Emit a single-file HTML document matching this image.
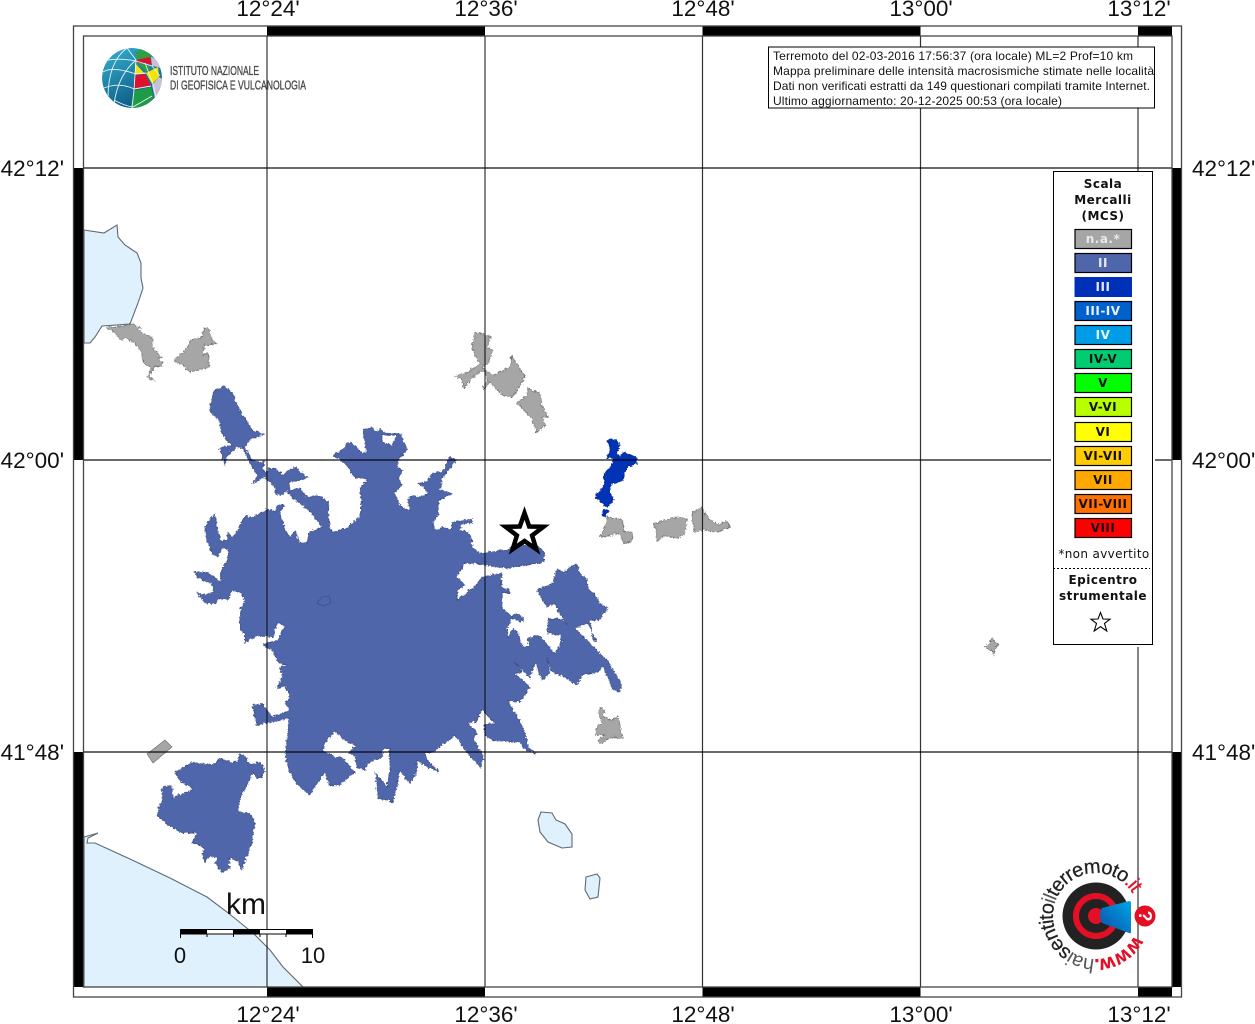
<!DOCTYPE html>
<html><head><meta charset="utf-8"><title>Mappa</title>
<style>
html,body{margin:0;padding:0;background:#fff;width:1255px;height:1024px;overflow:hidden}
svg{display:block}
text{font-family:"Liberation Sans",sans-serif}
.lab{font-size:22.5px;fill:#111}
.leg{font-family:"DejaVu Sans",sans-serif;font-size:12px;font-weight:bold;text-anchor:middle;letter-spacing:.5px;fill:#111}
.sw{stroke:#000;stroke-width:1.2}
.info{font-size:12px;fill:#111}
.b{fill:#5066ab;stroke:#3a4a80;stroke-width:.6}
.g{fill:#a6a6a6;stroke:#666;stroke-width:.6}
.t{fill:#0033b5;stroke:#00247f;stroke-width:.6}
.s{fill:#dff1fd;stroke:#5f6a72;stroke-width:1.1}
.gv{stroke:#333;stroke-width:1.2;mix-blend-mode:multiply}
.gh{stroke:#555;stroke-width:1.8;mix-blend-mode:multiply}
</style></head><body>
<svg width="1255" height="1024" viewBox="0 0 1255 1024" xmlns="http://www.w3.org/2000/svg">
<defs>
<linearGradient id="gb" x1="0" y1="0" x2=".5" y2="1"><stop offset="0" stop-color="#35b1cf"/><stop offset="1" stop-color="#0c5a85"/></linearGradient>
<linearGradient id="cone" x1="0" y1="1" x2="1" y2="0"><stop offset="0" stop-color="#0b4fa8"/><stop offset="1" stop-color="#00a5e6"/></linearGradient>
<clipPath id="gc"><circle cx="132" cy="78" r="30"/></clipPath>
<path id="arc" d="M1134.300 935.500A43 43 0 1 1 1137.500 904.900"/>
<filter id="jag" x="0" y="0" width="1255" height="1024" filterUnits="userSpaceOnUse" color-interpolation-filters="sRGB">
<feTurbulence type="turbulence" baseFrequency=".28" numOctaves="2" seed="4" result="n"/>
<feDisplacementMap in="SourceGraphic" in2="n" scale="4" xChannelSelector="R" yChannelSelector="G"/>
</filter>
</defs>
<rect width="1255" height="1024" fill="#fff"/>

<!-- water -->
<path class="s" d="M84 230L104 233L117 225L118 237L125 245L137 253L141 263L141 278L143 288L138 303L130 324L102 326L95 337L90 343L84 343Z"/>
<path class="s" d="M84 837L98 833L88 838L87 843L95 843L130 859L170 878L207 897L227 912L253 933L270 950L283 967L303 987L84 987Z"/>
<path class="s" d="M541 812L552 813L556 820L565 824L572 834L572 847L562 848L548 842L540 832L538 820Z"/>
<path class="s" d="M586 877L597 874L600 878L598 897L590 899L585 890Z"/>

<g transform="translate(-1.2 -.8)">
<g filter="url(#jag)">
<!-- gray -->
<path class="g" d="M107 327L123 326L133 323L137 327L143 328L138 330L147 335L153 338L153 347L162 357L157 360L163 362L162 366L155 366L150 375L155 381L148 377L151 367L143 362L141 350L135 343L127 338L120 340L115 332Z"/>
<path class="g" d="M202 337L205 328L210 329L212 340L217 343L210 345L205 345L203 355L208 353L210 367L190 372L183 365L174 360L188 348L190 340Z"/>
<path class="g" d="M475 334L482 333L491 337L487 347L493 350L488 363L483 367L493 375L500 372L510 367L512 355L515 362L525 375L523 382L512 397L503 395L498 390L490 382L483 390L487 380L485 373L482 370L473 378L464 388L462 379L455 376L468 372L480 363L472 348Z"/>
<path class="g" d="M528 387L533 391L540 393L542 405L549 418L542 417L546 425L537 432L533 420L527 413L517 403L527 395Z"/>
<path class="g" d="M608 517L622 519L624 531L633 532L632 542L623 543L620 533L601 537L605 527Z"/>
<path class="g" d="M653 524L677 517L687 519L685 535L677 538L665 535L657 541L656 528Z"/>
<path class="g" d="M692 513L702 507L708 517L718 525L727 521L730 527L717 532L705 530L695 532L692 520Z"/>
<path class="g" d="M600 708L605 710L604 717L610 720L618 717L623 738L612 737L600 744L598 740L605 735L595 735L598 725L603 723L599 713Z"/>
<path class="g" d="M991 638L995 641L999 645L995 648L994 655L991 650L985 647L990 644Z"/>

<!-- III -->
<path class="t" d="M608 440L617 439L620 445L617 452L620 457L623 452L637 457L637 464L627 467L622 482L612 483L610 493L614 500L607 507L595 497L604 485L605 473L613 463L613 458L607 458L610 450Z"/>
<path class="t" d="M604 509L609 510L605 517L602 515Z"/>

<!-- II main -->
<path class="b" fill-rule="evenodd" d="M240 630L245 633L245 643L257 635L273 637L277 623L285 625L278 640L268 642L263 645L273 650L278 662L287 665L280 668L283 675L277 689L285 685L291 696L285 703L290 710L272 717L263 704L253 705L257 725L289 718L286 752L288 767L298 785L310 795L325 772L330 785L340 785L355 772L343 757L337 758L323 750L325 743L335 731L347 742L357 745L348 753L355 755L357 767L365 770L368 763L382 757L384 748L390 748L390 772L387 787L376 773L378 798L393 802L397 787L400 770L410 783L417 773L417 760L430 768L440 772L427 760L425 753L433 752L455 735L467 752L481 768L484 757L474 740L477 733L468 722L477 722L482 710L495 723L485 724L485 735L492 740L520 742L523 748L537 754L528 747L527 740L520 720L515 713L508 700L520 702L530 687L514 673L522 672L515 662L530 678L535 663L543 680L550 672L547 658L552 672L565 677L577 685L583 675L597 672L603 667L608 677L612 688L620 692L622 683L607 660L587 640L575 628L588 623L597 642L593 640L590 620L600 620L608 607L600 605L597 597L588 588L587 578L580 573L578 565L572 566L568 568L565 573L557 568L553 583L537 590L547 607L555 603L563 618L567 625L562 619L548 619L548 633L560 635L563 640L555 653L550 648L540 635L528 638L530 648L522 645L518 632L513 628L508 637L507 628L512 618L523 622L523 617L515 613L512 616L502 608L502 593L510 593L510 589L502 589L502 573L482 577L473 588L457 600L458 590L465 585L457 577L465 563L473 563L487 565L507 568L530 564L544 562L545 553L540 547L515 543L507 550L480 553L472 547L473 542L468 532L460 530L463 523L472 523L472 519L452 522L452 530L443 527L435 530L433 522L439 513L439 500L452 493L440 490L443 477L457 460L450 457L443 472L433 473L427 482L418 483L425 488L428 493L420 497L412 495L408 500L410 510L404 508L400 505L394 493L402 485L398 477L403 470L397 468L398 460L403 455L407 448L403 440L402 434L393 433L383 432L382 428L377 432L372 427L363 431L367 452L362 453L353 443L347 443L343 450L333 455L345 463L355 477L368 480L360 488L362 503L360 517L347 528L333 532L330 528L328 502L318 495L307 497L300 488L290 490L289 482L308 478L295 467L288 470L283 475L277 470L270 468L265 473L263 468L265 463L252 460L245 447L252 438L265 434L252 430L240 410L232 392L223 386L213 392L210 410L220 422L222 433L232 445L220 448L225 465L228 455L237 447L243 448L250 463L258 475L253 483L265 477L275 487L277 495L282 495L287 490L293 498L303 505L315 517L322 527L308 533L308 543L300 543L295 530L290 537L285 530L280 512L285 505L277 505L276 511L267 509L252 518L245 516L238 530L232 537L228 532L227 540L221 541L218 530L215 513L205 527L207 540L212 553L218 557L223 547L229 550L227 562L220 573L222 582L207 572L195 572L197 578L212 583L214 592L205 595L197 592L205 603L215 604L220 598L228 600L232 590L240 592L245 600L240 612ZM382 435L397 435L392 445L382 442Z"/>
<path class="b" d="M240 753L247 758L250 765L260 762L265 770L262 777L257 778L253 772L247 785L240 798L238 812L250 813L255 822L252 843L242 870L238 860L230 858L230 868L223 872L215 863L218 858L212 856L208 857L205 862L202 853L206 850L200 845L192 842L197 833L183 833L168 825L157 815L162 800L163 787L172 786L173 798L193 789L180 780L175 772L183 768L192 762L213 765L220 758L230 762L237 762Z"/>
</g>
</g>
<path class="g" d="M147 754L165 740L172 747L153 763Z"/>
<path class="b" d="M317 603L322 597L329 596L331 603L323 606Z"/>

<!-- grid -->
<g>
<line class="gv" x1="267" y1="36" x2="267" y2="987"/>
<line class="gv" x1="485" y1="36" x2="485" y2="987"/>
<line class="gv" x1="702.5" y1="36" x2="702.5" y2="987"/>
<line class="gv" x1="920.5" y1="36" x2="920.5" y2="987"/>
<line class="gv" x1="1138" y1="36" x2="1138" y2="987"/>
<line class="gh" x1="83" y1="168" x2="1172" y2="168"/>
<line class="gh" x1="83" y1="460" x2="1172" y2="460"/>
<line class="gh" x1="83" y1="752" x2="1172" y2="752"/>
</g>

<!-- frame -->
<g fill="#000">
<rect x="267" y="26" width="218" height="10"/><rect x="702.5" y="26" width="218" height="10"/><rect x="1138" y="26" width="34" height="10"/>
<rect x="267" y="987" width="218" height="10"/><rect x="702.5" y="987" width="218" height="10"/><rect x="1138" y="987" width="34" height="10"/>
<rect x="73.500" y="168" width="10" height="292"/><rect x="73.500" y="752" width="10" height="235"/>
<rect x="1172" y="168" width="10" height="292"/><rect x="1172" y="752" width="10" height="235"/>
</g>
<rect x="73.500" y="26" width="1108" height="971" fill="none" stroke="#444" stroke-width="1.3"/>
<rect x="83.500" y="36" width="1088.500" height="951" fill="none" stroke="#444" stroke-width="1.3"/>

<!-- axis labels -->
<g>
<text class="lab" x="268" y="16" text-anchor="middle">12°24'</text>
<text class="lab" x="486" y="16" text-anchor="middle">12°36'</text>
<text class="lab" x="703" y="16" text-anchor="middle">12°48'</text>
<text class="lab" x="921" y="16" text-anchor="middle">13°00'</text>
<text class="lab" x="1139" y="16" text-anchor="middle">13°12'</text>
<text class="lab" x="268" y="1022" text-anchor="middle">12°24'</text>
<text class="lab" x="486" y="1022" text-anchor="middle">12°36'</text>
<text class="lab" x="703" y="1022" text-anchor="middle">12°48'</text>
<text class="lab" x="921" y="1022" text-anchor="middle">13°00'</text>
<text class="lab" x="1139" y="1022" text-anchor="middle">13°12'</text>
<text class="lab" x="64" y="176" text-anchor="end">42°12'</text>
<text class="lab" x="64" y="468" text-anchor="end">42°00'</text>
<text class="lab" x="64" y="760" text-anchor="end">41°48'</text>
<text class="lab" x="1192" y="176">42°12'</text>
<text class="lab" x="1192" y="468">42°00'</text>
<text class="lab" x="1192" y="760">41°48'</text>
</g>

<!-- INGV logo -->
<g clip-path="url(#gc)">
<circle cx="132" cy="78" r="30" fill="url(#gb)"/>
<path d="M136 52L146 46L153 56L143 60L137 61Z" fill="#2f9e45"/>
<path d="M136 60L150 57L152 65L145 63L138 63Z" fill="#e0102f"/>
<path d="M138 63L145 63L151 68L146 72Z" fill="#2f9e45"/>
<path d="M135 63L145 74L135 74Z" fill="#f5e400"/>
<path d="M135 75L145 74L151 86L134 89Z" fill="#e0102f"/>
<path d="M146 73L158 67L159 77L152 84Z" fill="#f5e400"/>
<path d="M151 57L160 60L163 70L158 67L152 66Z" fill="#c9c2d6"/>
<path d="M159 77L164 80L160 92L155 99L152 85Z" fill="#c9c2d6"/>
<path d="M134 91L151 87L154 97L143 110L130 110Z" fill="#1f9a46"/>
<g fill="none" stroke="#e6f4f8" stroke-width=".9">
<path d="M127 48L136 60L134 90L132 108"/>
<path d="M108 60Q120 58 136 61L152 66L160 76"/>
<path d="M103 72Q112 66 136 74L146 73"/>
<path d="M136 60Q118 75 114 104"/>
<path d="M127 48Q108 62 108 98"/>
<path d="M104 88Q120 82 134 89L151 86"/>
<path d="M114 100Q125 106 133 107L152 96"/>
<path d="M145 63L153 84L156 98"/>
</g>
</g>
<text x="170" y="75" font-size="12.500" fill="#4a4a4a" stroke="#4a4a4a" stroke-width=".35" textLength="89" lengthAdjust="spacingAndGlyphs">ISTITUTO NAZIONALE</text>
<text x="170" y="89.500" font-size="12.500" fill="#4a4a4a" stroke="#4a4a4a" stroke-width=".35" textLength="136" lengthAdjust="spacingAndGlyphs">DI GEOFISICA E VULCANOLOGIA</text>

<!-- info box -->
<rect x="768.500" y="47" width="386" height="61" fill="#fff" stroke="#000"/>
<text class="info" x="773" y="60" textLength="360">Terremoto del 02-03-2016 17:56:37 (ora locale) ML=2 Prof=10 km</text>
<text class="info" x="773" y="75" textLength="381">Mappa preliminare delle intensità macrosismiche stimate nelle località</text>
<text class="info" x="773" y="90" textLength="377">Dati non verificati estratti da 149 questionari compilati tramite Internet.</text>
<text class="info" x="773" y="105" textLength="289">Ultimo aggiornamento: 20-12-2025 00:53 (ora locale)</text>

<!-- legend -->
<rect x="1051" y="171" width="104" height="476" fill="#fff"/>
<rect x="1053.500" y="171.500" width="99" height="473" fill="#fff" stroke="#000"/>
<text class="leg" x="1103" y="188">Scala</text>
<text class="leg" x="1103" y="204">Mercalli</text>
<text class="leg" x="1103" y="220">(MCS)</text>
<g>
<rect class="sw" x="1075" y="229.500" width="56.500" height="19" fill="#a6a6a6"/>
<rect class="sw" x="1075" y="253.500" width="56.500" height="19" fill="#5066ab"/>
<rect x="1074.500" y="277" width="57.500" height="20" fill="#0030b8"/>
<rect class="sw" x="1075" y="301.500" width="56.500" height="19" fill="#0060cc"/>
<rect class="sw" x="1075" y="325.500" width="56.500" height="19" fill="#009ce8"/>
<rect class="sw" x="1075" y="349.500" width="56.500" height="19" fill="#00cc70"/>
<rect class="sw" x="1075" y="373.500" width="56.500" height="19" fill="#00ff00"/>
<rect class="sw" x="1075" y="397.500" width="56.500" height="19" fill="#b8ff00"/>
<rect class="sw" x="1075" y="422.500" width="56.500" height="19" fill="#ffff00"/>
<rect class="sw" x="1075" y="446.500" width="56.500" height="19" fill="#ffcc00"/>
<rect class="sw" x="1075" y="470.500" width="56.500" height="19" fill="#ffa800"/>
<rect class="sw" x="1075" y="494.500" width="56.500" height="19" fill="#ff7000"/>
<rect class="sw" x="1075" y="518.500" width="56.500" height="19" fill="#ff0000"/>
</g>
<g>
<text class="leg" x="1103" y="243" style="fill:#e8e8e8">n.a.*</text>
<text class="leg" x="1103" y="267" style="fill:#e8e8f4">II</text>
<text class="leg" x="1103" y="291" style="fill:#e8e8f4">III</text>
<text class="leg" x="1103" y="315" style="fill:#e8f0f8">III-IV</text>
<text class="leg" x="1103" y="339" style="fill:#e8f4fc">IV</text>
<text class="leg" x="1103" y="363">IV-V</text>
<text class="leg" x="1103" y="387">V</text>
<text class="leg" x="1103" y="411">V-VI</text>
<text class="leg" x="1103" y="436">VI</text>
<text class="leg" x="1103" y="460">VI-VII</text>
<text class="leg" x="1103" y="484">VII</text>
<text class="leg" x="1103" y="508">VII-VIII</text>
<text class="leg" x="1103" y="532">VIII</text>
</g>
<text class="leg" x="1104" y="558" style="font-weight:normal;letter-spacing:.35px">*non avvertito</text>
<line x1="1053" y1="568.500" x2="1150" y2="568.500" stroke="#000" stroke-dasharray="2 2"/>
<text class="leg" x="1103" y="584">Epicentro</text>
<text class="leg" x="1103" y="600">strumentale</text>
<path d="M1100.500 612.500L1103 619L1110 619.200L1104.500 623.500L1106.800 631L1100.500 626.700L1094.200 631L1096.500 623.500L1091 619.200L1098 619Z" fill="#fff" stroke="#000" stroke-width="1.100"/>

<!-- epicentre star -->
<path d="M524.500 513L529.200 526.500L543.500 526.800L532.100 535.500L536.300 549.200L524.500 541L512.700 549.200L516.900 535.500L505.500 526.800L519.800 526.500Z" fill="#fff" stroke="#000" stroke-width="4.500"/>

<!-- scale -->
<text x="246" y="914" font-size="30" text-anchor="middle" fill="#111">km</text>
<rect x="180" y="929" width="133" height="5.500" fill="#000"/>
<rect x="207" y="930" width="26" height="3.500" fill="#fff"/>
<rect x="260" y="930" width="26" height="3.500" fill="#fff"/>
<g stroke="#000" stroke-width="1"><line x1="180.500" y1="929" x2="180.500" y2="938"/><line x1="207" y1="934" x2="207" y2="937"/><line x1="233.500" y1="934" x2="233.500" y2="937"/><line x1="260" y1="934" x2="260" y2="937"/><line x1="286" y1="934" x2="286" y2="937"/><line x1="312.500" y1="929" x2="312.500" y2="938"/></g>
<text x="180" y="963" font-size="22" text-anchor="middle" fill="#111">0</text>
<text x="313" y="963" font-size="22" text-anchor="middle" fill="#111">10</text>

<!-- hai sentito logo -->
<circle cx="1096" cy="916" r="33.500" fill="#222"/>
<circle cx="1096" cy="916" r="20" fill="none" stroke="#e30f25" stroke-width="6"/>
<circle cx="1096" cy="916" r="8" fill="#e30f25"/>
<path d="M1102 908L1129 901Q1131 901 1131 903L1131 932Q1131 934 1129 933L1102 923Q1098 915 1102 908Z" fill="url(#cone)"/>
<circle cx="1145" cy="916" r="10.500" fill="#e30f25"/>
<text transform="translate(1145 916) rotate(90)" x="0" y="6" font-size="18" font-weight="bold" text-anchor="middle" fill="#fff">?</text>
<text font-size="20" fill="#222" letter-spacing="-.8" stroke="#222" stroke-width=".25"><textPath href="#arc"><tspan fill="#e30f25" stroke="#e30f25" font-weight="bold">www.</tspan><tspan fill="#555" stroke="none">hai</tspan>sentito<tspan fill="#555" stroke="none">il</tspan>terremoto<tspan fill="#e30f25" stroke="#e30f25">.it</tspan></textPath></text>
</svg>
</body></html>
